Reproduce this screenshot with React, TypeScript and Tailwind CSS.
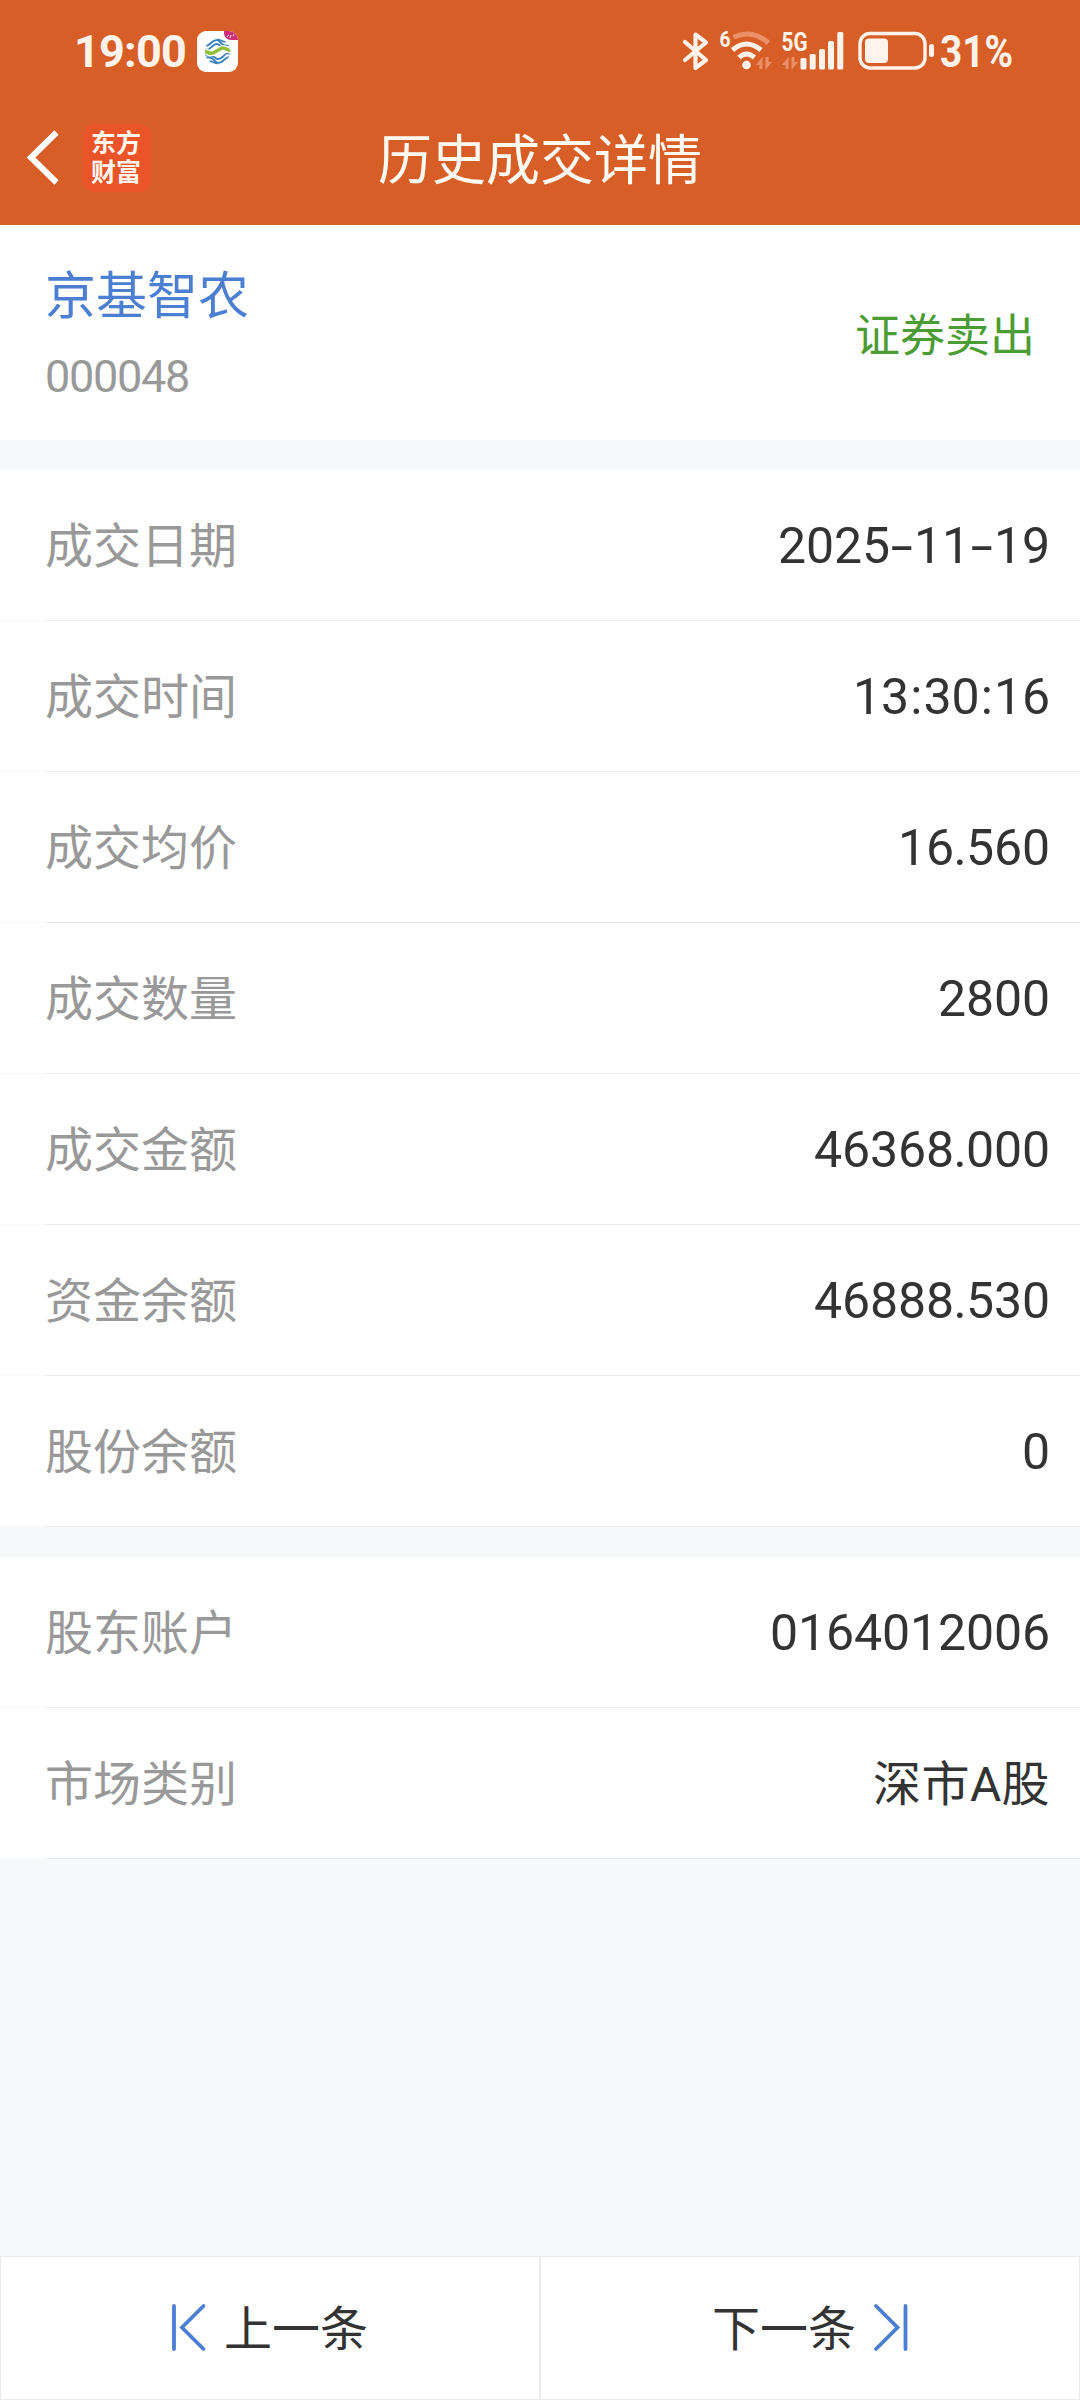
const tradeRows = [
  { label: "成交日期", value: "2025-11-19" },
  { label: "成交时间", value: "13:30:16" },
  { label: "成交均价", value: "16.560" },
  { label: "成交数量", value: "2800" },
  { label: "成交金额", value: "46368.000" },
  { label: "资金余额", value: "46888.530" },
  { label: "股份余额", value: "0" },
]

const accountRows = [
  { label: "股东账户", value: "0164012006" },
  { label: "市场类别", value: "深市A股" },
]

function CarrierIcon() {
  return (
    <svg width="41" height="41" viewBox="0 0 41 41">
      <clipPath id="globe">
        <circle cx="20.500" cy="20.500" r="12.700" />
      </clipPath>
      <rect width="41" height="41" rx="9" fill="#fff" />
      <path d="M27 0h5a9 9 0 0 1 9 9h-7a7 7 0 0 1-7-7z" fill="#cf2f78" />
      <path d="M30 6l1.500-2M33 7l1-3M36 5l1-1.500" stroke="#f7c6dc" strokeWidth="1.200" />
      <g fill="none" clipPath="url(#globe)">
        <g stroke="#3b82b8" strokeWidth="1.900">
          <path d="M7 14c3 2 5 0 7-2s5-4 8-2l3 3q4 3 8 1" />
          <path d="M7 17.500c4 3 6 0 8-2s5-4 8-1l2 1q4 3 9 1" />
          <path d="M10 9.500q6-4 11-1.500l4 2q2 1 5 0" />
          <path d="M34 27c-3-2-5 0-7 2s-5 4-8 2l-3-3q-4-3-8-1" />
          <path d="M34 23.500c-4-3-6 0-8 2s-5 4-8 1l-2-1q-4-3-9-1" />
          <path d="M31 31.500q-6 4-11 1.500l-4-2q-2-1-5 0" />
        </g>
        <path d="M6 19.500c4 2 8 4 11 2l7-4c3-2 6 1 11 3" stroke="#fff" strokeWidth="6" />
        <path d="M6 19.500c4 2 8 4 11 2l7-4c3-2 6 1 11 3" stroke="#94bf3c" strokeWidth="3.400" />
      </g>
    </svg>
  )
}

function StatusIcons() {
  return (
    <svg width="256" height="50" viewBox="680 26 256 50" fill="none">
      {/* bluetooth */}
      <path d="M685 42l21 18-10.500 8V34.500l10.500 8L685 60" stroke="#fff3eb" strokeWidth="4.200" strokeLinejoin="round" strokeLinecap="round" />

      {/* wifi */}
      <text x="719.500" y="46.500" fontFamily="Roboto" fontWeight="700" fontSize="22" textLength="11" lengthAdjust="spacingAndGlyphs" fill="#fff3eb">6</text>
      <g strokeWidth="5">
        <path d="M733.500 37.200Q752 28.500 768.500 43" stroke="#ea8f67" />
        <path d="M732.500 50Q746.500 38 761 50" stroke="#fff3eb" />
        <path d="M739 57.500Q746.500 50.500 754.500 57.500" stroke="#fff3eb" />
      </g>
      <circle cx="746.500" cy="65" r="4.300" fill="#fff3eb" />
      <path d="M756 65l6.500-8v12h-3v-4zM772 62l-6.500 8V57h3v5z" fill="#ea8f67" />

      {/* cellular */}
      <text x="781.500" y="50.500" fontFamily="Roboto" fontWeight="700" fontSize="25" textLength="26" lengthAdjust="spacingAndGlyphs" fill="#fff3eb">5G</text>
      <path d="M782 65l6.500-8v12h-3v-4zM798 62l-6.500 8V57h3v5z" fill="#ea8f67" />
      <g fill="#fff3eb">
        <rect x="800.500" y="58" width="6" height="11.500" rx="1.500" />
        <rect x="809.700" y="54" width="6" height="15.500" rx="1.500" />
        <rect x="819" y="49" width="6" height="20.500" rx="1.500" />
        <rect x="828" y="41" width="6" height="28.500" rx="1.500" />
        <rect x="837.300" y="32" width="6" height="37.500" rx="1.500" />
      </g>

      {/* battery */}
      <rect x="860" y="33.500" width="65" height="34.500" rx="10" stroke="#fff3eb" strokeWidth="3.400" />
      <rect x="865" y="38.500" width="23" height="24.500" rx="4" fill="#fff3eb" />
      <rect x="929" y="44" width="5" height="13" rx="2.500" fill="#fff3eb" />
    </svg>
  )
}

function StatusBar() {
  return (
    <div className="flex h-[102px] items-center pl-[74px]">
      <span className="w-[123px] text-[45px] font-bold leading-none tracking-[-0.8px] text-[#fff3eb]">19:00</span>
      <CarrierIcon />
      <div className="ml-[442px] flex items-center">
        <StatusIcons />
        <span className="ml-1 origin-left scale-x-[.86] text-[45px] font-bold leading-none text-[#fff3eb]">31%</span>
      </div>
    </div>
  )
}

function TitleBar() {
  return (
    <div className="relative flex h-[123px] items-center pb-[11px]">
      <svg className="ml-[25px]" width="36" height="60" viewBox="0 0 36 60" fill="none">
        <path d="M31.500 4.500L6 29.500L31.500 54.500" stroke="#fff" strokeWidth="6" />
      </svg>
      <div className="ml-[22px] flex h-[68px] w-[68px] flex-col items-center justify-center rounded-xl bg-[#ea5428] pr-0.5 text-[25px] font-bold leading-[29px] text-[#fff6ee]">
        <span>东方</span>
        <span>财富</span>
      </div>
      <h1 className="absolute inset-x-0 pt-[7px] text-center text-[54px] leading-none text-[#fffaf3]">历史成交详情</h1>
    </div>
  )
}

function Value({ text }: { text: string }) {
  return (
    <span className="flex pt-px text-[50px] leading-none text-[#333]">
      {text.split(/([-:.])/).map((part, i) => {
        if (part === "-") {
          return (
            <span key={i} className="flex w-6 justify-center">
              <span className="scale-x-[1.6]">-</span>
            </span>
          )
        }
        if (part === ":") return <span key={i} className="flex w-[14.500px] justify-center">:</span>
        if (part === ".") return <span key={i} className="flex w-3 justify-center">.</span>
        return <span key={i} className="tracking-[-0.1px]">{part}</span>
      })}
    </span>
  )
}

function Row({ label, value }: { label: string; value: string }) {
  return (
    <div className="bg-white">
      <div className="flex h-[150px] items-center justify-between pl-[45px] pr-[30px]">
        <span className="pt-1 text-[48px] leading-none text-[#999]">{label}</span>
        {/[A-Z]/.test(value) ? (
          <span className="pt-1 text-[48px] leading-none tracking-[0.4px] text-[#333]">{value}</span>
        ) : (
          <Value text={value} />
        )}
      </div>
      <div className="flex h-px">
        <div className="w-[45px] bg-[#fafafa]" />
        <div className="flex-1 bg-[#ebebeb]" />
      </div>
    </div>
  )
}

export default function App() {
  return (
    <div className="flex h-[2400px] w-[1080px] flex-col bg-[#f7f8fa] font-[Roboto,'Noto_Sans_CJK_SC',sans-serif]">
      <header className="h-[225px] bg-[#d75f27]">
        <StatusBar />
        <TitleBar />
      </header>

      <section className="flex h-[215px] items-center justify-between bg-white px-[45px] pt-2">
        <div className="flex flex-col">
          <span className="text-[51px] leading-[72px] text-[#4c7fd2]">京基智农</span>
          <span className="mt-2 text-[45px] leading-[72px] tracking-[-1.300px] text-[#999]">000048</span>
        </div>
        <span className="text-[45px] leading-none text-[#4b9c34]">证券卖出</span>
      </section>

      <section className="mt-[30px]">
        {tradeRows.map((row) => (
          <Row key={row.label} {...row} />
        ))}
      </section>

      <section className="mt-[30px]">
        {accountRows.map((row) => (
          <Row key={row.label} {...row} />
        ))}
      </section>

      <footer className="mt-auto flex h-[144px] text-[48px] leading-none text-[#333]">
        <button className="flex w-1/2 items-center justify-center gap-4 border border-[#ebebeb] bg-white">
          <svg width="36" height="50" viewBox="0 0 36 50" fill="none" stroke="#4c7fd2" strokeWidth="3.800" strokeLinecap="round">
            <path d="M2 3v43M31.500 3L10 24.500L31.500 46" />
          </svg>
          <span className="pt-1">上一条</span>
        </button>
        <button className="flex w-1/2 items-center justify-center gap-4 border border-[#ebebeb] bg-white">
          <span className="pt-1">下一条</span>
          <svg width="36" height="50" viewBox="0 0 36 50" fill="none" stroke="#4c7fd2" strokeWidth="3.800" strokeLinecap="round">
            <path d="M33.500 3v43M4 3l21.500 21.500L4 46" />
          </svg>
        </button>
      </footer>
    </div>
  )
}
